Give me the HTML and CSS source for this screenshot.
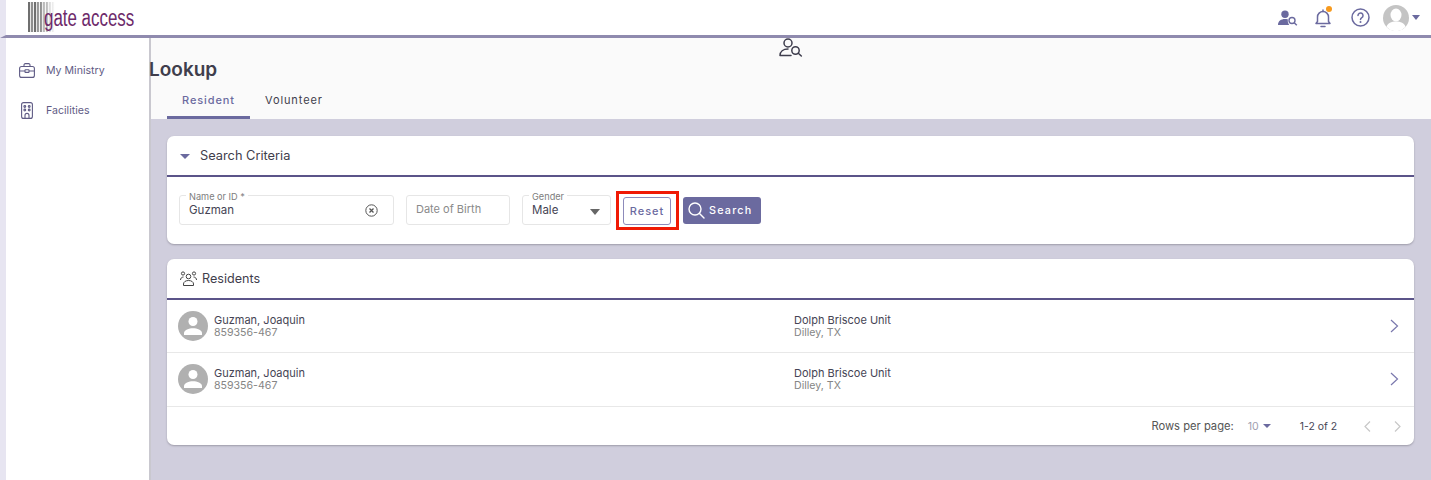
FILE: index.html
```html
<!DOCTYPE html>
<html lang="en">
<head>
<meta charset="utf-8">
<title>Lookup</title>
<link rel="stylesheet" href="styles.css">
</head>
<body>
<div class="app">
  <header class="topbar">
    <div class="logo">
      <span class="barcode"></span>
      <span class="logo-text">gate access</span>
    </div>
    <div class="top-actions">
      <svg class="ti ti-lookup" width="20" height="16" viewBox="0 0 20 16"><circle cx="7" cy="4.2" r="3.7" fill="#6b6a9f"/><path d="M0 15c0-4 3-6 7-6 1 0 2 .1 3 .5-.6 1.700 0 3.500 1.200 5.500z" fill="#6b6a9f"/><circle cx="14" cy="10.500" r="3" fill="none" stroke="#6b6a9f" stroke-width="1.400"/><path d="M16.200 12.700l2.600 2.600" stroke="#6b6a9f" stroke-width="1.400"/></svg>
      <span class="bell">
        <svg width="18" height="20" viewBox="0 0 18 20" fill="none" stroke="#6b6a9f" stroke-width="1.500" stroke-linecap="round" stroke-linejoin="round"><path d="M3.500 13.500V9a5.500 5.500 0 0 1 11 0v4.500l1.500 2H2z"/><path d="M7 18.500h4M9 3.500V2"/></svg>
        <i class="dot"></i>
      </span>
      <svg class="ti-help" width="19" height="19" viewBox="0 0 19 19" fill="none"><circle cx="9.500" cy="9.500" r="8.500" stroke="#6b6a9f" stroke-width="1.500"/><path d="M7 7.500a2.500 2.500 0 1 1 3.800 2.100c-.9.600-1.300 1-1.300 2" stroke="#6b6a9f" stroke-width="1.500" stroke-linecap="round"/><circle cx="9.500" cy="14" r="1" fill="#6b6a9f"/></svg>
      <span class="avatar-wrap">
        <svg width="26" height="26" viewBox="0 0 26 26"><circle cx="13" cy="13" r="13" fill="#c4c4c4"/><ellipse cx="13" cy="10" rx="5.500" ry="6.500" fill="#fff"/><path d="M3.500 22c1-4 5-5.500 9.500-5.500s8.500 1.500 9.500 5.500A13 13 0 0 1 3.500 22z" fill="#fff"/></svg>
        <i class="caret"></i>
      </span>
    </div>
  </header>
  <div class="body">
    <nav class="sidebar">
      <a class="nav-item">
        <svg width="16" height="15" viewBox="0 0 16 15" fill="none" stroke="#5f5b85" stroke-width="1.100"><rect x=".6" y="3.500" width="14.800" height="10.900" rx="2"/><path d="M5 3.500V2a1.300 1.300 0 0 1 1.300-1.400h3.400A1.300 1.300 0 0 1 11 2v1.500M.6 8h5.400M10 8h5.400"/><rect x="6" y="6.800" width="4" height="2.600" rx=".5"/></svg>
        <span>My Ministry</span>
      </a>
      <a class="nav-item">
        <svg width="16" height="17" viewBox="0 0 12 17" fill="none" stroke="#5f5b85" stroke-width="1.100"><rect x=".6" y=".6" width="10.800" height="15.800" rx="2"/><circle cx="3.800" cy="4.500" r=".9"/><circle cx="8.200" cy="4.500" r=".9"/><circle cx="3.800" cy="8" r=".9"/><circle cx="8.200" cy="8" r=".9"/><path d="M4 16.400v-3a2 2 0 0 1 4 0v3"/></svg>
        <span>Facilities</span>
      </a>
    </nav>
    <main class="content">
      <section class="page-head">
        <svg class="head-icon" width="24" height="19" viewBox="0 0 24 19" fill="none" stroke="#3d3c4c" stroke-width="1.500" stroke-linecap="round"><circle cx="9" cy="5" r="4"/><path d="M1 17.500c0-4 3.200-6.500 8-6.500M1 17.500h11"/><circle cx="16.500" cy="12.500" r="3.700"/><path d="M19.300 15.300l3 2.700"/></svg>
        <h1>Lookup</h1>
        <div class="tabs">
          <a class="tab active">Resident</a>
          <a class="tab">Volunteer</a>
        </div>
      </section>
      <section class="panel-area">
        <div class="card">
          <div class="card-head">
            <i class="caret caret-head"></i>
            <span class="caret-gap">Search Criteria</span>
          </div>
          <div class="form">
            <div class="field f-name">
              <label>Name or ID *</label>
              <span class="value">Guzman</span>
              <svg class="clear" width="13" height="13" viewBox="0 0 13 13" fill="none" stroke="#555" stroke-width="1"><circle cx="6.500" cy="6.500" r="5.700"/><path d="M4.500 4.500l4 4M8.500 4.500l-4 4" stroke-width="1.300"/></svg>
            </div>
            <div class="field f-dob"><span class="placeholder">Date of Birth</span></div>
            <div class="field f-gender">
              <label>Gender</label>
              <span class="value">Male</span>
              <i class="caret caret-gray"></i>
            </div>
            <div class="reset-mark"><button class="btn-reset">Reset</button></div>
            <button class="btn-search">
              <svg width="17" height="17" viewBox="0 0 17 17" fill="none" stroke="#fff" stroke-width="1.400" stroke-linecap="round"><circle cx="7" cy="7" r="6"/><path d="M11.500 11.500l4.500 4.500"/></svg>
              <span>Search</span>
            </button>
          </div>
        </div>
        <div class="card">
          <div class="card-head card-head-res">
            <svg width="17" height="15" viewBox="0 0 17 15" fill="none" stroke="#444" stroke-width="1"><circle cx="8.500" cy="5.500" r="2.300"/><circle cx="3" cy="2.500" r="1.600"/><circle cx="14" cy="2.500" r="1.600"/><path d="M3.500 14.500v-1.500c0-2 2-3.500 5-3.500s5 1.500 5 3.500v1.500zM.5 9c0-1.500 1-3 3-3M16.500 9c0-1.500-1-3-3-3"/></svg>
            <span>Residents</span>
          </div>
          <div class="row">
            <span class="person-icon"><svg width="20" height="20" viewBox="0 0 20 20" fill="#fff"><circle cx="10" cy="5.500" r="4.500"/><path d="M1 19v-2c0-3 5-4.700 9-4.700s9 1.700 9 4.700v2z"/></svg></span>
            <div class="cell-a"><div class="primary">Guzman, Joaquin</div><div class="secondary">859356-467</div></div>
            <div class="cell-b"><div class="primary">Dolph Briscoe Unit</div><div class="secondary">Dilley, TX</div></div>
            <svg class="chev" width="9" height="14" viewBox="0 0 9 14" fill="none" stroke="#7a78ad" stroke-width="1.200"><path d="M1 1l6.500 6L1 13"/></svg>
          </div>
          <div class="row">
            <span class="person-icon"><svg width="20" height="20" viewBox="0 0 20 20" fill="#fff"><circle cx="10" cy="5.500" r="4.500"/><path d="M1 19v-2c0-3 5-4.700 9-4.700s9 1.700 9 4.700v2z"/></svg></span>
            <div class="cell-a"><div class="primary">Guzman, Joaquin</div><div class="secondary">859356-467</div></div>
            <div class="cell-b"><div class="primary">Dolph Briscoe Unit</div><div class="secondary">Dilley, TX</div></div>
            <svg class="chev" width="9" height="14" viewBox="0 0 9 14" fill="none" stroke="#7a78ad" stroke-width="1.200"><path d="M1 1l6.500 6L1 13"/></svg>
          </div>
          <div class="pager">
            <span class="rows-label">Rows per page:</span>
            <span class="rows-val">10</span>
            <i class="caret caret-sm"></i>
            <span class="range">1-2 of 2</span>
            <svg class="pg" width="7" height="11" viewBox="0 0 7 11" fill="none" stroke="#c8c8c8" stroke-width="1.200"><path d="M6 .5l-5 5 5 5"/></svg>
            <svg class="pg pg-next" width="7" height="11" viewBox="0 0 7 11" fill="none" stroke="#c8c8c8" stroke-width="1.200"><path d="M1 .5l5 5-5 5"/></svg>
          </div>
        </div>
      </section>
    </main>
  </div>
</div>
</body>
</html>
```
FILE: styles.css
```css
* { box-sizing: border-box; }
html, body { margin: 0; height: 100%; }
body {
  font-family: Inter, "Noto Sans", "Liberation Sans", sans-serif;
  color: #3f3e4c;
  background: #d0cedd;
  overflow: hidden;
}
.app { height: 480px; display: flex; flex-direction: column; overflow: hidden; }

.topbar {
  height: 38px;
  flex: none;
  display: flex;
  align-items: center;
  justify-content: space-between;
  background: #fff;
  border-left: 6px solid #e7e5f1;
  border-bottom: 3px solid #8f8aae;
  position: relative;
}
.logo { display: flex; align-items: center; padding-left: 38px; height: 35px; position: relative; }
.barcode {
  position: absolute;
  left: 22px;
  top: 2px;
  width: 27px;
  height: 30px;
  background:
    linear-gradient(90deg, rgba(255,255,255,0) 30%, #fff 100%),
    repeating-linear-gradient(90deg, #6f6f6f 0 2px, #e4e4e4 2px 3px, #8e8e8e 3px 5px, #efefef 5px 6px);
}
.logo-text {
  position: relative;
  font-family: "Liberation Sans Narrow", "Liberation Sans", sans-serif;
  font-size: 23px;
  line-height: 30px;
  color: #6d2a6a;
  display: inline-block;
  transform: scaleX(.735);
  transform-origin: left center;
  white-space: nowrap;
}
.top-actions { display: flex; align-items: center; padding-right: 11px; }
.bell { position: relative; display: flex; margin: 0 19px 0 16px; }
.ti-help { margin-right: 13px; }
.dot { position: absolute; right: 0; top: -2px; width: 6px; height: 6px; border-radius: 50%; background: #f79a1e; }
.avatar-wrap { display: flex; align-items: center; gap: 3px; }
.caret {
  display: inline-block;
  width: 0; height: 0;
  border-left: 4.500px solid transparent;
  border-right: 4.500px solid transparent;
  border-top: 5px solid #6b6a9f;
}

.body { flex: 1; display: flex; min-height: 0; }
.sidebar {
  width: 151px;
  flex: none;
  background: #fff;
  border-left: 6px solid #e7e5f1;
  border-right: 2px solid #c9c8cf;
  padding: 13px 0 0 13px;
}
.nav-item {
  display: flex;
  align-items: center;
  gap: 11px;
  height: 39.500px;
  font-size: 10.600px;
  color: #5f5b85;
}
.nav-item svg { flex: none; }

.content { flex: 1; display: flex; flex-direction: column; min-width: 0; }
.page-head { height: 81px; flex: none; background: #fafafa; position: relative; }
.head-icon { position: absolute; left: 628px; top: 0; }
h1 {
  margin: 0 0 0 -2px;
  padding-top: 20px;
  font-size: 19px;
  line-height: 24px;
  font-weight: 600;
  color: #3f3e4c;
}
.tabs { display: flex; margin: 5px 0 0 16px; }
.tab {
  height: 32px;
  line-height: 26px;
  font-size: 11px;
  font-weight: 400;
  letter-spacing: .9px;
  padding: 0 15px;
  color: #3f3e4c;
}
.tab.active { color: #6b6a9f; font-weight: 500; border-bottom: 3px solid #6b6a9f; }

.panel-area {
  flex: 1;
  padding: 17px 17px 0 16px;
  display: flex;
  flex-direction: column;
  gap: 15px;
  background: #d0cedd;
}
.card { background: #fff; border-radius: 7px; box-shadow: 0 1px 2px #9d9ba8; }
.card-head {
  height: 41px;
  display: flex;
  align-items: center;
  padding: 0 13px 1px;
  border-bottom: 2px solid #5b5489;
  font-size: 12.800px;
  color: #3f3e4c;
}
.caret-head { border-left-width: 5px; border-right-width: 5px; margin-top: 2px; }
.caret-gap { margin-left: 10px; }
.card-head-res { gap: 5px; font-size: 12.600px; }
.form { height: 67px; display: flex; align-items: center; padding: 0 12px; }
.field {
  height: 30px;
  border: 1px solid #e6e6e6;
  border-radius: 3px;
  position: relative;
  top: -1px;
  display: flex;
  align-items: center;
  font-size: 11.500px;
  padding-left: 9px;
  flex: none;
}
.field label {
  position: absolute;
  left: 6px;
  top: -4px;
  padding: 0 3px;
  background: #fff;
  font-size: 9.200px;
  line-height: 9px;
  color: #7d7d7d;
}
.value { color: #454454; }
.placeholder { color: #8a8a8a; font-size: 11px; position: relative; top: -1px; }
.f-name { width: 215px; margin-right: 12px; }
.clear { position: absolute; right: 15px; top: 8px; }
.f-dob { width: 104px; margin-right: 12px; }
.f-gender { width: 89px; margin-right: 5px; }
.caret-gray { position: absolute; right: 10px; top: 13px; border-top-color: #666; border-left-width: 5.500px; border-right-width: 5.500px; border-top-width: 6px; }
.reset-mark {
  width: 63px;
  height: 39px;
  border: 3px solid #f01a05;
  display: flex;
  align-items: center;
  justify-content: center;
  margin-right: 4px;
  flex: none;
}
.btn-reset {
  width: 48px;
  height: 28px;
  margin-right: 1px;
  background: #fff;
  border: 1px solid #8d8bbb;
  border-radius: 3px;
  color: #6b6a9f;
  font: 500 11px Inter, sans-serif;
  letter-spacing: 1px;
  padding: 0;
}
.btn-search {
  width: 78px;
  height: 27px;
  background: #6b6a9f;
  border: 0;
  border-radius: 3px;
  color: #fff;
  font: 500 10.800px Inter, sans-serif;
  letter-spacing: 1.200px;
  display: flex;
  align-items: center;
  gap: 4px;
  padding: 0 0 0 5px;
  flex: none;
}

.row {
  height: 53px;
  display: flex;
  align-items: center;
  padding: 0 15px 0 11px;
  border-bottom: 1px solid #e8e8e8;
}
.row + .row { height: 54px; padding-bottom: 1px; }
.person-icon {
  width: 30px; height: 30px;
  border-radius: 50%;
  background: #b0b0b0;
  display: flex;
  align-items: center;
  justify-content: center;
  flex: none;
}
.cell-a { width: 580px; margin-left: 6px; flex: none; }
.cell-b { flex: 1; }
.primary { font-size: 11px; line-height: 13px; color: #454454; padding-top: 1px; }
.secondary { font-size: 10.600px; line-height: 12px; color: #858585; }
.chev { flex: none; }
.pager {
  height: 38px;
  display: flex;
  align-items: center;
  justify-content: flex-end;
  padding-right: 13px;
  font-size: 11.200px;
  color: #555;
}
.rows-label { margin-right: 14px; }
.rows-val { color: #a0a0b0; font-size: 10.600px; margin-right: 4px; }
.caret-sm { border-left-width: 4px; border-right-width: 4px; border-top-width: 4px; margin-right: 29px; }
.range { margin-right: 27px; color: #454454; font-size: 10.400px; }
.pg-next { margin-left: 23px; }
```
